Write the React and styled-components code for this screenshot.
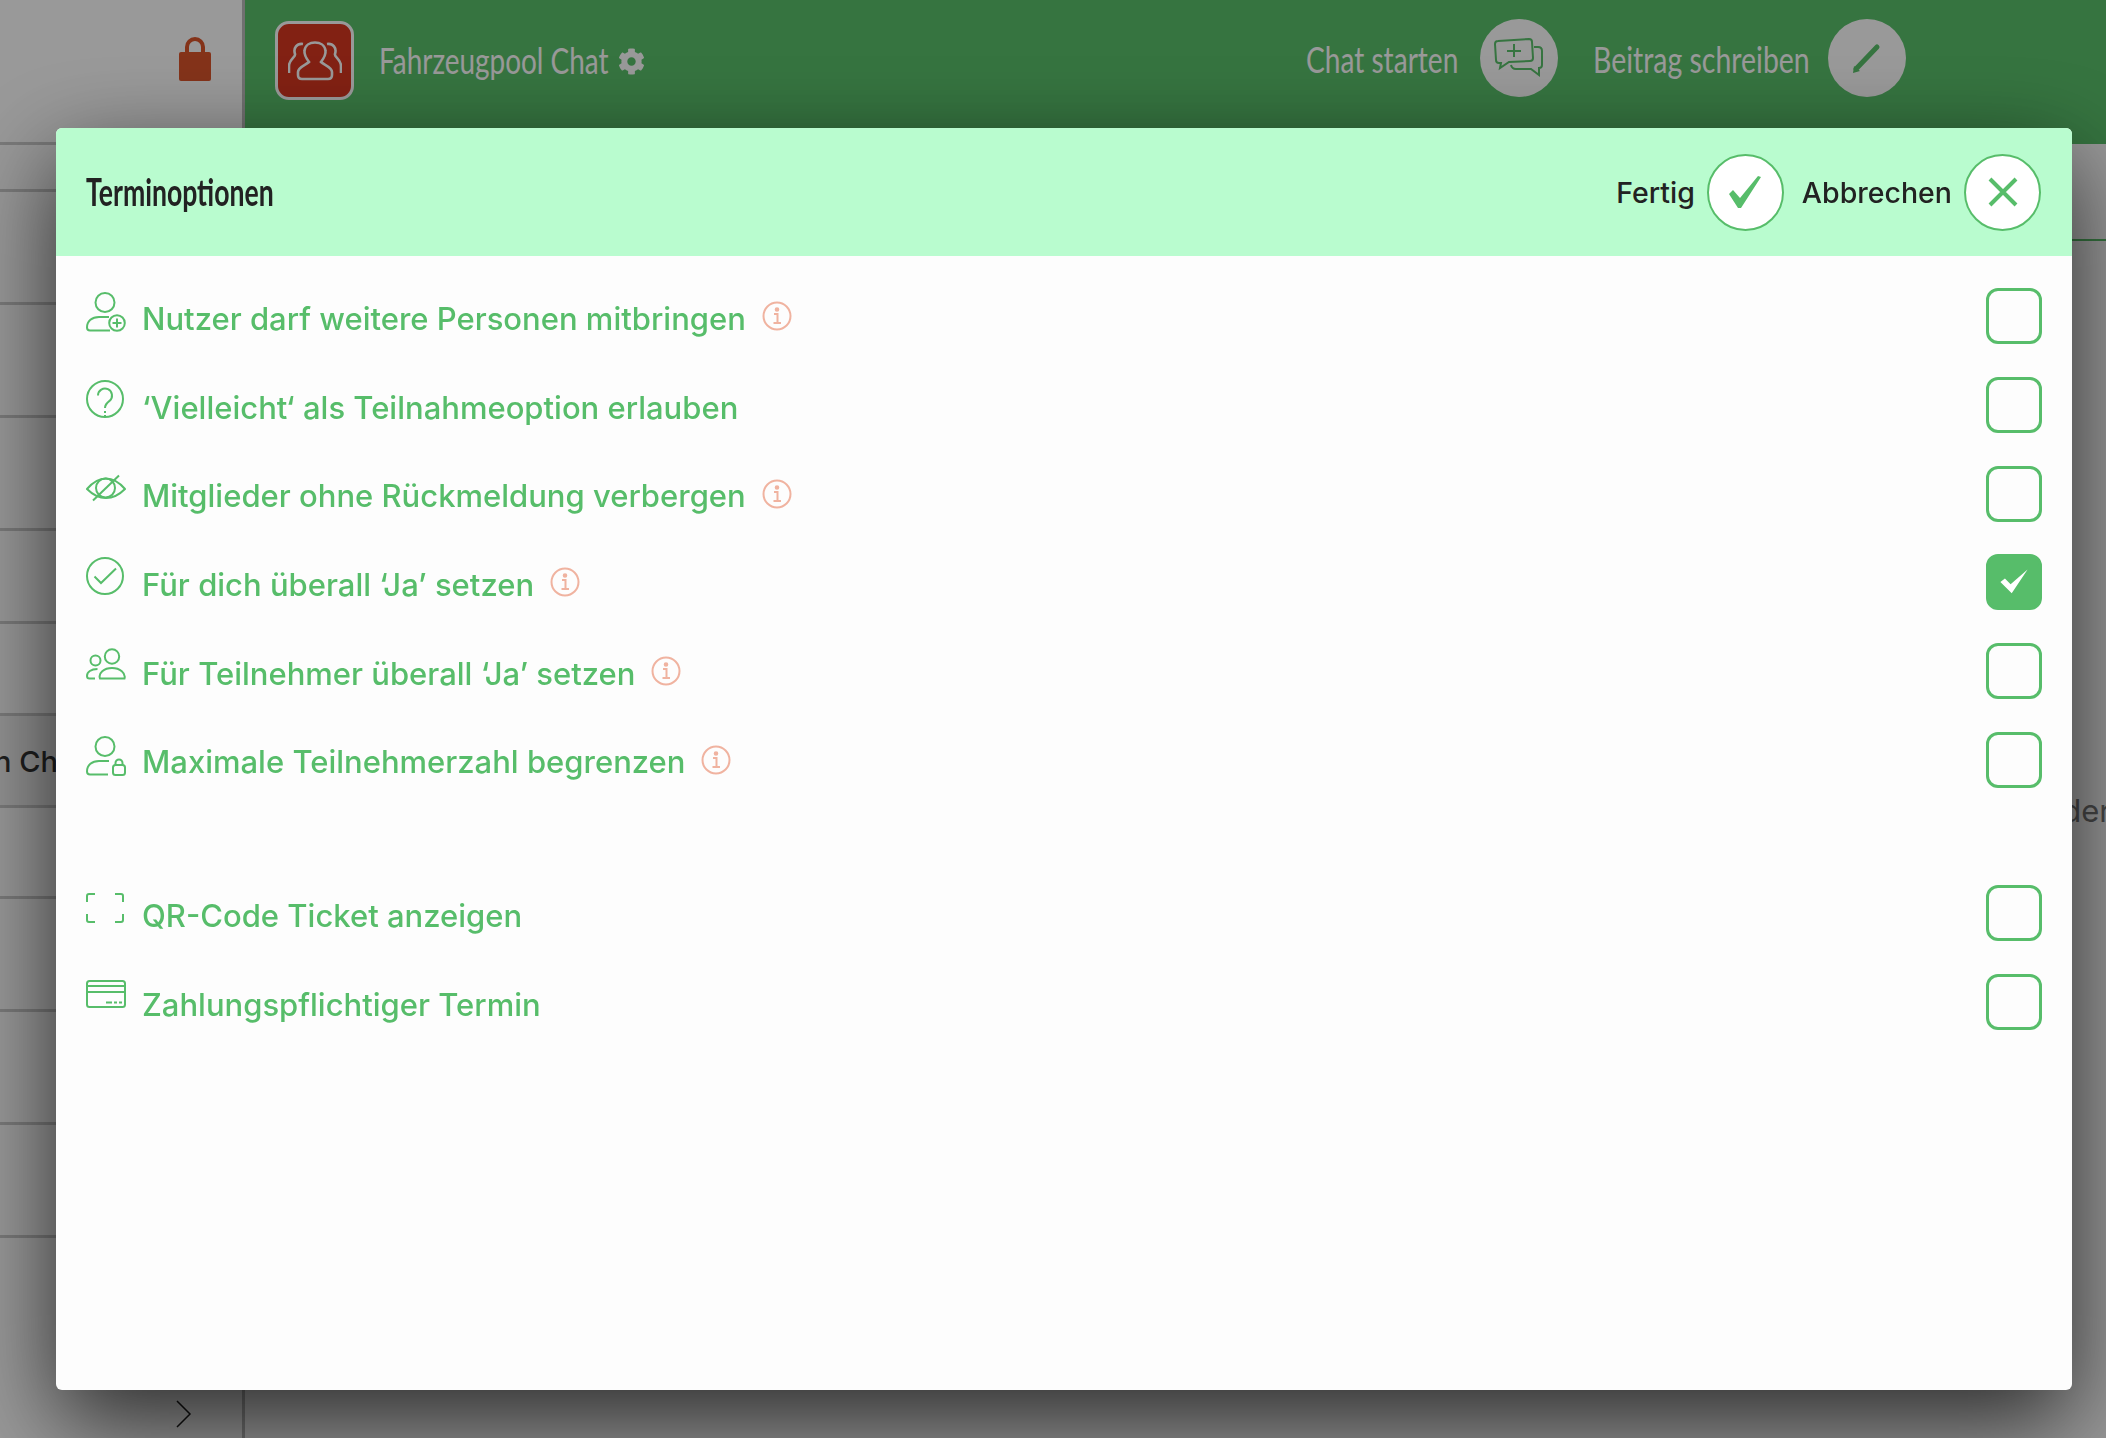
import styled, { createGlobalStyle } from 'styled-components';
import { FaCog } from 'react-icons/fa';

const GREEN = '#57bd6a';

const GlobalStyle = createGlobalStyle`
  html, body {
    margin: 0;
    height: 100%;
    overflow: hidden;
    background: #fff;
    font-family: Inter, "Liberation Sans", sans-serif;
  }
`;

function PersonPlusIcon() {
  return (
    <RowSvg viewBox="0 0 40 40" $top={-8}>
      <circle cx="19" cy="10.5" r="9.5" />
      <path d="M23 25H13C6 25 1 29 1 35.5Q1 38.5 4 38.5H24" />
      <circle cx="31" cy="31" r="7.8" />
      <path d="M31 26.5v9M26.5 31h9" />
    </RowSvg>
  );
}

function QuestionIcon() {
  return (
    <RowSvg viewBox="0 0 40 40" $top={-10}>
      <circle cx="19" cy="19" r="18" />
      <path d="M12 15.5a7 7 0 1 1 11.5 5.4c-3 2.3-4.5 3.6-4.5 7.1M19 31v2M19 35v1" />
    </RowSvg>
  );
}

function EyeOffIcon() {
  return (
    <RowSvg viewBox="0 0 40 40" $top={-10}>
      <path d="M1 20C7 13 13 9.5 20 9.5S33 13 39 20C33 26 27 29 20 29S7 26 1 20Z" />
      <circle cx="19.5" cy="19" r="9.5" />
      <path d="M33 6.5L7 31.5" />
    </RowSvg>
  );
}

function CheckCircleIcon() {
  return (
    <RowSvg viewBox="0 0 40 40" $top={-10}>
      <circle cx="19" cy="19" r="18" />
      <path d="M8.5 19.5L15 26L30 11.5" />
    </RowSvg>
  );
}

function PeopleIcon() {
  return (
    <RowSvg viewBox="0 0 40 40" $top={-9}>
      <circle cx="26" cy="9.5" r="7.2" />
      <path d="M14 31.5C12 26 18 21 26 21S40 26 38.5 31.5Z" />
      <circle cx="9.5" cy="13.5" r="5" />
      <path d="M11.5 22C5 22 1 25 1 29Q1 31.5 3.5 31.5H9" />
    </RowSvg>
  );
}

function PersonLockIcon() {
  return (
    <RowSvg viewBox="0 0 40 40" $top={-8}>
      <circle cx="19" cy="10.5" r="9.5" />
      <path d="M23 25H13C6 25 1 29 1 35.5Q1 38.5 4 38.5H22" />
      <rect x="27" y="29" width="12" height="10" rx="2.5" />
      <path d="M29.5 29v-2a3.5 3.5 0 0 1 7 0v2" />
    </RowSvg>
  );
}

function ScanIcon() {
  return (
    <RowSvg viewBox="0 0 40 40" $top={-11}>
      <path d="M9 6H3Q1 6 1 8V14M29 6H35Q37 6 37 8V14M9 34H3Q1 34 1 32V26M29 34H35Q37 34 37 32V26" />
    </RowSvg>
  );
}

function CardIcon() {
  return (
    <RowSvg viewBox="0 0 40 40" $top={-13}>
      <rect x="1" y="5" width="38" height="26" rx="2.5" />
      <path d="M1 10H39M1 16H39M20 26.5H26M28 26.5H31M33 26.5H36" />
    </RowSvg>
  );
}

function InfoIcon() {
  return (
    <InfoSvg viewBox="0 0 30 30">
      <circle cx="15" cy="15" r="13.5" />
      <path d="M12 13H15.5V22M11.5 22H19" />
      <circle cx="15" cy="8.5" r="1.3" fill="#f0b3a0" />
    </InfoSvg>
  );
}

const options = [
  { label: 'Nutzer darf weitere Personen mitbringen', Icon: PersonPlusIcon, info: true },
  { label: '‘Vielleicht‘ als Teilnahmeoption erlauben', Icon: QuestionIcon },
  { label: 'Mitglieder ohne Rückmeldung verbergen', Icon: EyeOffIcon, info: true },
  { label: 'Für dich überall ‘Ja’ setzen', Icon: CheckCircleIcon, info: true, checked: true },
  { label: 'Für Teilnehmer überall ‘Ja’ setzen', Icon: PeopleIcon, info: true },
  { label: 'Maximale Teilnehmerzahl begrenzen', Icon: PersonLockIcon, info: true },
];

const extraOptions = [
  { label: 'QR-Code Ticket anzeigen', Icon: ScanIcon },
  { label: 'Zahlungspflichtiger Termin', Icon: CardIcon },
];

function OptionRow({ label, Icon, info, checked }) {
  return (
    <Row>
      <Icon />
      <Label>{label}</Label>
      {info && <InfoIcon />}
      <Check $checked={checked}>
        {checked && (
          <svg width="34" height="34" viewBox="0 0 30 30">
            <path d="M3 15L7 12L12 17L27 4L13 25Z" fill="#fff" />
          </svg>
        )}
      </Check>
    </Row>
  );
}

export default function App() {
  return (
    <>
      <GlobalStyle />
      <Page>
        <Sidebar>
          <SideHead>
            <svg width="34" height="46" viewBox="0 0 34 46">
              <path d="M9 20V11a8 8 0 0 1 16 0v9" fill="none" stroke="#dc552b" strokeWidth="4" />
              <rect x="1" y="16" width="32" height="29" rx="2" fill="#dc552b" />
            </svg>
          </SideHead>
          <SideRow $height={47} />
          <SideRow $height={113} />
          <SideRow $height={113} />
          <SideRow $height={113} />
          <SideRow $height={93} />
          <SideRow $height={92} />
          <SideRow $height={92} $selected>
            <SideText>n Chat</SideText>
          </SideRow>
          <SideRow $height={91} />
          <SideRow $height={113} />
          <SideRow $height={113} />
          <SideRow $height={113} />
          <SideRow $height={113} />
          <SideFoot>
            <svg width="16" height="28" viewBox="0 0 16 28">
              <path d="M1 1L14 14L1 27" fill="none" stroke="#1c1c1c" strokeWidth="1.5" />
            </svg>
          </SideFoot>
        </Sidebar>
        <Main>
          <TopBar>
            <GroupTile>
              <svg width="54" height="40" viewBox="0 0 54 40" fill="none" stroke="#fff" strokeWidth="2.6">
                <path d="M14 38H40Q44 38 44 34V31C44 26 36 24 33 21C36 17 38 14 37.5 10C37 4 32 1.5 27 1.5S17 4 16.5 10C16 14 18 17 21 21C18 24 10 26 10 31V34Q10 38 14 38Z" />
                <path d="M15 3C9 2 5 7 7 13C8 16 1 18 1 25V32M39 3C45 2 49 7 47 13C46 16 53 18 53 25V32" />
              </svg>
            </GroupTile>
            <CondensedText $width={228} $scale={0.775} $size={36} $color="#fff">
              Fahrzeugpool Chat
            </CondensedText>
            <GearIcon />
            <Actions>
              <CondensedText $width={151} $scale={0.78} $size={36} $color="#fff" $top={1}>
                Chat starten
              </CondensedText>
              <RoundAction $gap={23}>
                <svg width="50" height="40" viewBox="0 0 50 40" fill="none" stroke="#5ac26b" strokeWidth="2">
                  <path d="M4 3L35 1Q38 1 38 4L39 20Q39 23 36 23L15 24L6 30L7 25H5Q2 25 2 22L1 6Q1 3 4 3Z" />
                  <path d="M40 9H44Q48 9 48 13V27Q48 30 45 30V37L37 31H22Q18 31 17 27" />
                  <path d="M20 6V19M13 13H27" />
                </svg>
              </RoundAction>
              <CondensedText $width={215} $scale={0.79} $size={36} $color="#fff" $left={35} $top={1}>
                Beitrag schreiben
              </CondensedText>
              <RoundAction $gap={20}>
                <svg width="34" height="34" viewBox="0 0 34 34">
                  <path d="M6 28L27 6" stroke="#5ac26b" strokeWidth="5" strokeLinecap="round" />
                  <path d="M3 32L4 25L10 30Z" fill="#5ac26b" />
                </svg>
              </RoundAction>
            </Actions>
          </TopBar>
          <ContentRow $height={97} />
          <ContentRow $height={590} $align="flex-end">
            <ContentText>oder</ContentText>
          </ContentRow>
        </Main>
      </Page>
      <Overlay>
        <Modal>
          <ModalHeader>
            <CondensedText $width={191} $scale={0.7} $size={38} $weight={700} $color="#222" $top={-2}>
              Terminoptionen
            </CondensedText>
            <HeaderActions>
              <HeaderLabel>Fertig</HeaderLabel>
              <HeaderButton>
                <svg width="36" height="36" viewBox="0 0 36 36">
                  <path d="M2 20L6 16L13 24L31 2L34 3L14 34H11Z" fill={GREEN} />
                </svg>
              </HeaderButton>
              <HeaderLabel $left={18}>Abbrechen</HeaderLabel>
              <HeaderButton>
                <svg width="32" height="32" viewBox="0 0 32 32">
                  <path d="M3 3L29 29M29 3L3 29" stroke={GREEN} strokeWidth="4" />
                </svg>
              </HeaderButton>
            </HeaderActions>
          </ModalHeader>
          <ModalBody>
            <OptionGroup>
              {options.map((option) => (
                <OptionRow key={option.label} {...option} />
              ))}
            </OptionGroup>
            <OptionGroup>
              {extraOptions.map((option) => (
                <OptionRow key={option.label} {...option} />
              ))}
            </OptionGroup>
          </ModalBody>
        </Modal>
      </Overlay>
    </>
  );
}

const Page = styled.div`
  display: grid;
  grid-template-columns: 245px 1fr;
  height: 1438px;
  overflow: hidden;
`;

const Sidebar = styled.aside`
  display: flex;
  flex-direction: column;
  border-right: 3px solid #bbb;
  box-sizing: border-box;
`;

const SideHead = styled.div`
  height: 142px;
  flex: none;
  display: flex;
  align-items: center;
  justify-content: flex-end;
  padding: 0 30px 24px 0;
  box-sizing: border-box;
  background: #fff;
`;

const SideRow = styled.div`
  height: ${({ $height }) => $height}px;
  flex: none;
  box-sizing: border-box;
  border-top: 3px solid #ccc;
  display: flex;
  align-items: center;
  overflow: hidden;
  background: ${({ $selected }) => ($selected ? '#f4f4f4' : '#fff')};
`;

const SideText = styled.span`
  margin: 2px 0 0 -6px;
  font-size: 29px;
  font-weight: 500;
  color: #333;
  white-space: nowrap;
`;

const SideFoot = styled.div`
  flex: 1;
  display: flex;
  justify-content: flex-end;
  padding: 52px 50px 0 0;
`;

const Main = styled.main`
  display: flex;
  flex-direction: column;
  min-width: 0;
`;

const TopBar = styled.header`
  height: 144px;
  flex: none;
  display: flex;
  align-items: flex-start;
  padding: 21px 200px 0 30px;
  box-sizing: border-box;
  background: #5ac26b;
`;

const GroupTile = styled.div`
  width: 79px;
  height: 79px;
  box-sizing: border-box;
  margin-right: 25px;
  border: 3px solid #fff;
  border-radius: 14px;
  background: #d93720;
  display: flex;
  align-items: center;
  justify-content: center;
`;

const CondensedText = styled.span`
  display: inline-block;
  flex: none;
  width: ${({ $width }) => $width}px;
  margin: ${({ $top }) => $top || 0}px 0 0 ${({ $left }) => $left || 0}px;
  font-family: Lato, "Liberation Sans", sans-serif;
  font-size: ${({ $size }) => $size}px;
  font-weight: ${({ $weight }) => $weight || 400};
  color: ${({ $color }) => $color};
  white-space: nowrap;
  transform: scaleX(${({ $scale }) => $scale});
  transform-origin: left center;
  line-height: 79px;
`;

const GearIcon = styled(FaCog)`
  width: 27px;
  height: 27px;
  margin: 27px 0 0 11px;
  color: #fff;
`;

const Actions = styled.div`
  margin-left: auto;
  display: flex;
  align-items: flex-start;
  margin-top: -2px;
`;

const RoundAction = styled.div`
  width: 78px;
  height: 78px;
  margin-left: ${({ $gap }) => $gap}px;
  border-radius: 50%;
  background: #fff;
  display: flex;
  align-items: center;
  justify-content: center;
`;

const ContentRow = styled.div`
  height: ${({ $height }) => $height}px;
  flex: none;
  box-sizing: border-box;
  border-bottom: 2px solid ${({ $align }) => ($align ? 'transparent' : '#5ac26b')};
  display: flex;
  justify-content: ${({ $align }) => $align || 'flex-start'};
  align-items: flex-end;
  overflow: hidden;
`;

const ContentText = styled.span`
  margin-right: -5px;
  font-size: 31px;
  color: #777;
  white-space: nowrap;
`;

const Overlay = styled.div`
  position: fixed;
  inset: 0;
  display: flex;
  padding: 128px 34px 48px 56px;
  background: rgba(0, 0, 0, 0.4);
`;

const Modal = styled.div`
  flex: 1;
  display: flex;
  flex-direction: column;
  border-radius: 6px;
  overflow: hidden;
  background: #fdfdfd;
  box-shadow: 0 32px 95px rgba(0, 0, 0, 0.72);
`;

const ModalHeader = styled.div`
  height: 128px;
  flex: none;
  display: flex;
  align-items: center;
  justify-content: space-between;
  padding: 0 31px 0 30px;
  box-sizing: border-box;
  background: #b9fccf;
`;

const HeaderActions = styled.div`
  display: flex;
  align-items: center;
`;

const HeaderLabel = styled.span`
  margin: 0 12px 0 ${({ $left }) => $left || 0}px;
  font-size: 28.5px;
  font-weight: 500;
  color: #222;
`;

const HeaderButton = styled.button`
  width: 77px;
  height: 77px;
  padding: 0;
  border: 2px solid ${GREEN};
  border-radius: 50%;
  background: #fff;
  display: flex;
  align-items: center;
  justify-content: center;
`;

const ModalBody = styled.div`
  flex: 1;
  display: flex;
  flex-direction: column;
  gap: 65px;
  padding: 16px 30px 0;
`;

const OptionGroup = styled.div`
  display: flex;
  flex-direction: column;
`;

const Row = styled.div`
  height: 88.7px;
  display: flex;
  align-items: center;
`;

const RowSvg = styled.svg`
  width: 40px;
  height: 40px;
  flex: none;
  margin: ${({ $top }) => $top}px 16px 0 0;
  fill: none;
  stroke: ${GREEN};
  stroke-width: 2;
`;

const Label = styled.span`
  font-size: 31px;
  font-weight: 500;
  color: ${GREEN};
  margin-top: 4px;
  white-space: nowrap;
`;

const InfoSvg = styled.svg`
  width: 30px;
  height: 30px;
  margin-left: 16px;
  fill: none;
  stroke: #f0b3a0;
  stroke-width: 2;
`;

const Check = styled.div`
  width: 56px;
  height: 56px;
  margin-left: auto;
  box-sizing: border-box;
  border: 3px solid ${GREEN};
  border-radius: 12px;
  background: ${({ $checked }) => ($checked ? GREEN : 'transparent')};
  display: flex;
  align-items: center;
  justify-content: center;
`;
